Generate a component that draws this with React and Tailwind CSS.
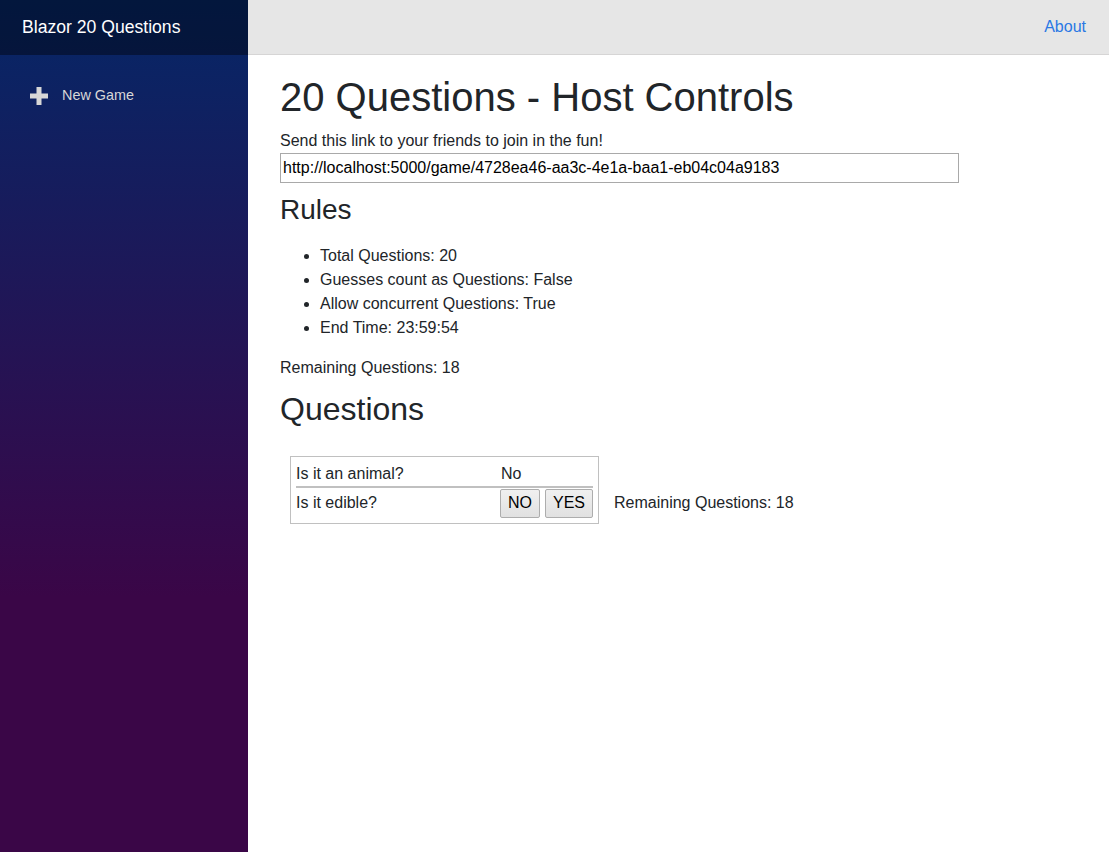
export default function App() {
  const rules = [
    'Total Questions: 20',
    'Guesses count as Questions: False',
    'Allow concurrent Questions: True',
    'End Time: 23:59:54',
  ]

  return (
    <div className="flex min-h-[852px] font-['Liberation_Sans',Arial,sans-serif] text-[#212529]">
      {/* sidebar */}
      <div className="w-[248px] shrink-0 bg-[linear-gradient(180deg,#052767_0%,#3a0647_70%)]">
        <div className="h-[55px] bg-black/40 flex items-center pl-[22px] text-white text-[17.6px]">
          Blazor 20 Questions
        </div>
        <div className="pt-[17px]">
          <a className="flex items-center h-[48px] pl-[30px] text-[#d7d7d7] text-[14.4px]">
            <svg width="18" height="18" viewBox="0 0 18 18" className="mr-[14px]">
              <rect x="6.5" y="0" width="5" height="18" fill="#d7d7d7" />
              <rect x="0" y="6.5" width="18" height="5" fill="#d7d7d7" />
            </svg>
            New Game
          </a>
        </div>
      </div>

      {/* main */}
      <div className="flex-1 min-w-0">
        <div className="h-[55px] bg-[#e6e6e6] border-b border-[#d6d5d5] flex items-center justify-end pr-[23px]">
          <a className="text-[#2a78e4] text-[16px]">About</a>
        </div>

        <div className="pl-[32px] pt-[18px]">
          <h1 className="text-[40px] leading-[48px] mb-[8px]">20 Questions - Host Controls</h1>
          <p className="text-[16px] leading-[24px]">Send this link to your friends to join in the fun!</p>
          <input
            readOnly
            value="http://localhost:5000/game/4728ea46-aa3c-4e1a-baa1-eb04c04a9183"
            className="block w-[679px] h-[30px] border border-[#a9a9a9] px-[2px] text-[16px] text-black outline-none"
          />

          <h3 className="text-[28px] leading-[34px] mt-[10px]">Rules</h3>
          <ul className="list-disc pl-[40px] mt-[17px] mb-[16px]">
            {rules.map((r) => (
              <li key={r} className="text-[16px] leading-[24px]">
                {r}
              </li>
            ))}
          </ul>
          <p className="text-[16px] leading-[24px]">Remaining Questions: 18</p>

          <h2 className="text-[32px] leading-[38px] mt-[10px]">Questions</h2>

          <div className="flex items-end mt-[28px]">
            <div className="ml-[10px] border border-[#c0c0c0] p-[5px] text-[16px]">
              <div className="flex h-[24px] items-center">
                <div className="w-[204px]">Is it an animal?</div>
                <div className="w-[93px] pl-[1px]">No</div>
              </div>
              <div className="h-[2px] bg-[#c0c0c0]" />
              <div className="flex h-[30px] items-center">
                <div className="w-[204px]">Is it edible?</div>
                <div className="w-[93px] flex gap-[5px]">
                  <button className="w-[40px] h-[29px] border border-[#adadad] bg-[linear-gradient(#f0f0f0,#e1e1e1)] rounded-[2px] text-[16px] text-black">
                    NO
                  </button>
                  <button className="w-[48px] h-[29px] border border-[#adadad] bg-[linear-gradient(#f0f0f0,#e1e1e1)] rounded-[2px] text-[16px] text-black">
                    YES
                  </button>
                </div>
              </div>
            </div>
            <span className="ml-[15px] mb-[9px] text-[16px] leading-[24px]">Remaining Questions: 18</span>
          </div>
        </div>
      </div>
    </div>
  )
}
